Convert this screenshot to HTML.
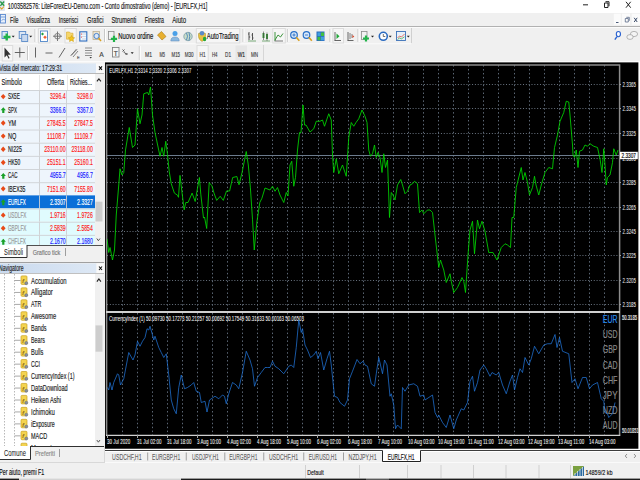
<!DOCTYPE html><html><head><meta charset="utf-8"><title>MT4</title><style>html,body{margin:0;padding:0;background:#f0f0f0;overflow:hidden}svg{display:block}text{font-family:"Liberation Sans",sans-serif}</style></head><body>
<svg width="640" height="480" viewBox="0 0 640 480" font-family="Liberation Sans, sans-serif">
<rect x="0" y="0" width="640" height="480" fill="#f0f0f0" />
<rect x="0" y="0" width="640" height="13" fill="#ffffff" />
<rect x="0" y="0" width="4.8" height="11" fill="#dfe5ee" />
<path d="M0.3 1.5 L4.2 5.8 M4.2 1.5 L0.3 5.8" stroke="#2a9a4a" stroke-width="1.3"/>
<path d="M0 7.3 L1.7 9 L4 6.5" stroke="#e0a020" stroke-width="1.1" fill="none"/>
<text x="7.8" y="8.6" font-size="8.2" fill="#1a1a1a" stroke="#1a1a1a" stroke-width="0.16" textLength="199.5" lengthAdjust="spacingAndGlyphs" >1003582576: LiteForexEU-Demo.com - Conto dimostrativo (demo) - [EURLFX,H1]</text>
<line x1="583" y1="4.8" x2="588" y2="4.8" stroke="#333" stroke-width="1.1" />
<path d="M604.5 3 h3.5 v4.5 h-3.5 z M605.5 1.7 h3.5 v4.5" stroke="#222" stroke-width="1" fill="none"/>
<path d="M626 1.8 L630.7 7.7 M630.7 1.8 L626 7.7" stroke="#222" stroke-width="1"/>
<line x1="0" y1="26.5" x2="640" y2="26.5" stroke="#a8a8a8" stroke-width="1" />
<rect x="0.5" y="14.5" width="5" height="8.5" fill="#e8f0fa" stroke="#5b8bd0" stroke-width="0.9"/>
<line x1="1" y1="17" x2="5" y2="17" stroke="#5b8bd0" stroke-width="0.8" />
<path d="M1.5 21 l1.5 -2 l1.5 1 l1 -1.5" stroke="#5b8bd0" stroke-width="0.6" fill="none"/>
<text x="10" y="22.6" font-size="8.2" fill="#1a1a1a" stroke="#1a1a1a" stroke-width="0.16" textLength="8.5" lengthAdjust="spacingAndGlyphs" >File</text>
<text x="26.6" y="22.6" font-size="8.2" fill="#1a1a1a" stroke="#1a1a1a" stroke-width="0.16" textLength="23.4" lengthAdjust="spacingAndGlyphs" >Visualizza</text>
<text x="58.8" y="22.6" font-size="8.2" fill="#1a1a1a" stroke="#1a1a1a" stroke-width="0.16" textLength="19.3" lengthAdjust="spacingAndGlyphs" >Inserisci</text>
<text x="87.1" y="22.6" font-size="8.2" fill="#1a1a1a" stroke="#1a1a1a" stroke-width="0.16" textLength="16.3" lengthAdjust="spacingAndGlyphs" >Grafici</text>
<text x="111.5" y="22.6" font-size="8.2" fill="#1a1a1a" stroke="#1a1a1a" stroke-width="0.16" textLength="24.8" lengthAdjust="spacingAndGlyphs" >Strumenti</text>
<text x="144.7" y="22.6" font-size="8.2" fill="#1a1a1a" stroke="#1a1a1a" stroke-width="0.16" textLength="19.3" lengthAdjust="spacingAndGlyphs" >Finestra</text>
<text x="172.3" y="22.6" font-size="8.2" fill="#1a1a1a" stroke="#1a1a1a" stroke-width="0.16" textLength="13.7" lengthAdjust="spacingAndGlyphs" >Aiuto</text>
<rect x="613.8" y="13.7" width="7" height="11" fill="#fbfbfb" />
<rect x="622" y="13.7" width="8" height="11" fill="#fbfbfb" />
<rect x="631.8" y="13.7" width="8.2" height="11" fill="#fbfbfb" />
<line x1="616" y1="22.5" x2="618.5" y2="22.5" stroke="#4a5a78" stroke-width="1" />
<path d="M625.3 18.5 h3 v3.5 h-3 z M626.3 17.3 h3 v3.5" stroke="#5a6a88" stroke-width="0.8" fill="none"/>
<path d="M634.2 17.8 L637.2 22 M637.2 17.8 L634.2 22" stroke="#3a4a68" stroke-width="1"/>
<line x1="0" y1="27.4" x2="640" y2="27.4" stroke="#fcfcfc" stroke-width="1" />
<line x1="0" y1="43.7" x2="411" y2="43.7" stroke="#fbfbfb" stroke-width="1" />
<rect x="0" y="61" width="640" height="1.4" fill="#fbfbfb" />
<line x1="35" y1="29" x2="35" y2="42" stroke="#c8c8c8" stroke-width="1" />
<line x1="36" y1="29" x2="36" y2="42" stroke="#ffffff" stroke-width="1" />
<rect x="38.5" y="28.5" width="11.5" height="14.5" fill="#f6f6f6" stroke="#dcdcdc" stroke-width="1"/>
<rect x="65.0" y="28.5" width="11.3" height="14.5" fill="#f6f6f6" stroke="#dcdcdc" stroke-width="1"/>
<line x1="104.5" y1="29" x2="104.5" y2="42" stroke="#c8c8c8" stroke-width="1" />
<line x1="105.5" y1="29" x2="105.5" y2="42" stroke="#ffffff" stroke-width="1" />
<line x1="243" y1="29" x2="243" y2="42" stroke="#c8c8c8" stroke-width="1" />
<line x1="244" y1="29" x2="244" y2="42" stroke="#ffffff" stroke-width="1" />
<rect x="272.8" y="28.5" width="12.5" height="14.5" fill="#f6f6f6" stroke="#dcdcdc" stroke-width="1"/>
<line x1="287.8" y1="29" x2="287.8" y2="42" stroke="#c8c8c8" stroke-width="1" />
<line x1="288.8" y1="29" x2="288.8" y2="42" stroke="#ffffff" stroke-width="1" />
<line x1="330" y1="29" x2="330" y2="42" stroke="#c8c8c8" stroke-width="1" />
<line x1="331" y1="29" x2="331" y2="42" stroke="#ffffff" stroke-width="1" />
<line x1="358" y1="29" x2="358" y2="42" stroke="#c8c8c8" stroke-width="1" />
<line x1="359" y1="29" x2="359" y2="42" stroke="#ffffff" stroke-width="1" />
<line x1="411.5" y1="28" x2="411.5" y2="43" stroke="#d0d0d0" stroke-width="1" />
<rect x="2" y="31.5" width="5.5" height="7" fill="#dbe8f7" stroke="#4f86c8" stroke-width="0.9"/>
<path d="M6.7 33.5 v7 M3.5 37 h7" stroke="#22b34a" stroke-width="2.4"/>
<path d="M11.7 35.7 h3 l-1.5 1.8 z" fill="#222"/>
<rect x="19.2" y="31.5" width="6.5" height="7" fill="#dce6f3" stroke="#5a8ac8" stroke-width="0.9"/>
<rect x="21.7" y="34.5" width="6" height="7" fill="#c8d8ee" stroke="#5a8ac8" stroke-width="0.9"/>
<path d="M29.2 35.7 h3 l-1.5 1.8 z" fill="#222"/>
<rect x="40.5" y="31" width="7" height="10.5" fill="#ffffff" stroke="#4f86c8" stroke-width="0.9"/>
<path d="M42.5 32.5 l1.5 1.5 l-1.5 1.5 l-1.5 -1.5z" fill="#20a040"/>
<path d="M45 35.5 l1.8 1.8 l-1.8 1.8 l-1.8 -1.8z" fill="#f06030"/>
<path d="M57.5 31.5 v9.5 M53 36.2 h9" stroke="#666" stroke-width="0.9"/>
<circle cx="57.5" cy="36.2" r="2.8" stroke="#777" stroke-width="0.9" fill="none"/>
<path d="M66.5 32 h3 l1 1.2 h2.5 v6 h-6.5z" fill="#f6d66a" stroke="#d6a830" stroke-width="0.6"/>
<path d="M71.5 35.5 l1 2 2.2 0.3 -1.6 1.5 0.4 2.2 -2 -1 -2 1 0.4 -2.2 -1.6 -1.5 2.2 -0.3z" fill="#f3c520" stroke="#c99a10" stroke-width="0.5"/>
<rect x="79.8" y="31.8" width="7" height="9.2" fill="#f4f8fc" stroke="#2f6ec0" stroke-width="1.1"/>
<line x1="82" y1="34" x2="86" y2="34" stroke="#b0c0d8" stroke-width="0.6" />
<line x1="82" y1="36.5" x2="86" y2="36.5" stroke="#b0c0d8" stroke-width="0.6" />
<line x1="82" y1="39" x2="86" y2="39" stroke="#b0c0d8" stroke-width="0.6" />
<circle cx="81.5" cy="34" r="0.6" fill="#e03030"/><circle cx="81.5" cy="37" r="0.6" fill="#e03030"/>
<rect x="93" y="31.5" width="6.5" height="8" fill="#ece4d2" stroke="#b8a888" stroke-width="0.7"/>
<circle cx="96.5" cy="36" r="2.6" fill="#dbe8f8" stroke="#3a78c8" stroke-width="0.9"/>
<path d="M98.5 38 l2.5 3" stroke="#d9a020" stroke-width="1.4"/>
<rect x="108.5" y="31.5" width="5.5" height="8" fill="#f2f2f2" stroke="#8a8a8a" stroke-width="0.8"/>
<path d="M114 35.8 v6.2 M110.9 38.9 h6.2" stroke="#22b34a" stroke-width="2.2"/>
<text x="118.3" y="38.7" font-size="8.2" fill="#111" stroke="#111" stroke-width="0.16" textLength="35" lengthAdjust="spacingAndGlyphs" >Nuovo ordine</text>
<path d="M157.5 35 l4 -3.5 l4.5 5 l-4 3.5z" fill="#e8b030" stroke="#a87818" stroke-width="0.6"/>
<circle cx="175" cy="33.5" r="2.5" fill="#4aa0e8"/>
<path d="M170.8 41 q0 -4 4.2 -4 q4.2 0 4.2 4z" fill="#8ab8e0" stroke="#5a88b8" stroke-width="0.5"/>
<circle cx="188" cy="36.5" r="4.2" fill="#c8dcc8" stroke="#7a9aa8" stroke-width="0.8"/>
<path d="M186.5 33 q2 3 0 7 M189 32.5 q1.5 4 0 8" stroke="#3a7ab8" stroke-width="0.8" fill="none"/>
<rect x="196.3" y="28.5" width="43.5" height="14.5" fill="#f6f6f6" stroke="#dcdcdc" stroke-width="1"/>
<path d="M198.5 33.5 q3.5 -3 7 0 v3 q0 3 -3.5 5 q-3.5 -2 -3.5 -5z" fill="#e8c040" stroke="#a88a20" stroke-width="0.5"/>
<circle cx="202" cy="33.2" r="2.3" fill="#5a8ac8"/>
<ellipse cx="204.6" cy="39" rx="1.7" ry="2.3" fill="#22a83a"/>
<text x="206.8" y="38.8" font-size="8.2" fill="#111" stroke="#111" stroke-width="0.16" textLength="31.8" lengthAdjust="spacingAndGlyphs" >AutoTrading</text>
<path d="M249 32 v8 M248 34 h1 M249 37 h1.2 M252.5 33 v7 M251.5 35 h1 M252.5 38 h1" stroke="#444" stroke-width="0.9"/>
<line x1="248" y1="41" x2="256" y2="41" stroke="#5a9a5a" stroke-width="0.8" />
<rect x="262.5" y="33" width="2" height="5" fill="#3a9a3a" />
<rect x="266" y="34" width="2" height="5" fill="#3a9a3a" />
<line x1="263.5" y1="31.5" x2="263.5" y2="40" stroke="#444" stroke-width="0.6" />
<line x1="267" y1="32.5" x2="267" y2="41" stroke="#444" stroke-width="0.6" />
<line x1="262" y1="41" x2="270" y2="41" stroke="#5a9a5a" stroke-width="0.8" />
<path d="M275 41 v-9 M275 40 l3 -5 l2.5 2 l2.5 -3.5" stroke="#2a8a2a" stroke-width="0.9" fill="none"/>
<line x1="274.5" y1="41" x2="283" y2="41" stroke="#444" stroke-width="0.7" />
<circle cx="294" cy="35" r="3.3" fill="#dbeafa" stroke="#2a70c8" stroke-width="1.2"/>
<path d="M296.3 37.3 l3 3.5" stroke="#d9a020" stroke-width="1.6"/>
<path d="M292.4 35 h3.2" stroke="#2a70c8" stroke-width="0.9"/>
<path d="M294 33.4 v3.2" stroke="#2a70c8" stroke-width="0.9"/>
<circle cx="306.5" cy="35" r="3.3" fill="#dbeafa" stroke="#2a70c8" stroke-width="1.2"/>
<path d="M308.8 37.3 l3 3.5" stroke="#d9a020" stroke-width="1.6"/>
<path d="M304.9 35 h3.2" stroke="#2a70c8" stroke-width="0.9"/>
<rect x="316.5" y="31.5" width="8" height="9.5" fill="#2a6ac0" />
<rect x="317.5" y="32.5" width="3" height="3.5" fill="#40a0e0" />
<rect x="321" y="32.5" width="3" height="3.5" fill="#40c040" />
<rect x="317.5" y="36.8" width="3" height="3.5" fill="#40c040" />
<rect x="321" y="36.8" width="3" height="3.5" fill="#40a0e0" />
<rect x="333.0" y="28.5" width="10.5" height="14.5" fill="#f6f6f6" stroke="#dcdcdc" stroke-width="1"/>
<path d="M335 32 v8.5 M334.5 40.5 h6.5" stroke="#444" stroke-width="0.8"/>
<path d="M336.5 33.5 l3 2.8 l-3 2.8z" fill="#22a83a"/>
<path d="M348 32 v8.5 M347.5 40.5 h6" stroke="#444" stroke-width="0.8"/>
<path d="M350 33 v6 M352 34 v4" stroke="#666" stroke-width="0.8"/>
<path d="M352.5 35 l1.8 1.5 l-1.8 1.5z" fill="#e04020"/>
<rect x="361.5" y="31.5" width="5.5" height="8" fill="#f2f2f2" stroke="#8a8a8a" stroke-width="0.8"/>
<path d="M366 35.5 v6 M363 38.5 h6" stroke="#22b34a" stroke-width="2.2"/>
<path d="M371.0 35.7 h3 l-1.5 1.8 z" fill="#222"/>
<circle cx="383.3" cy="36.3" r="4" fill="#ffffff" stroke="#2a6ac0" stroke-width="1.6"/>
<path d="M383.3 34 v2.5 h2" stroke="#333" stroke-width="0.7" fill="none"/>
<path d="M388.7 35.7 h3 l-1.5 1.8 z" fill="#222"/>
<rect x="396.5" y="31.5" width="9" height="9" fill="#e8f0f8" stroke="#3a70b8" stroke-width="0.9"/>
<path d="M397.5 38 l2 -2 l2 1 l3 -3" stroke="#e04030" stroke-width="0.7" fill="none"/>
<path d="M397.5 39.5 l2 -1.5 l2 0.8 l3 -2" stroke="#30a040" stroke-width="0.7" fill="none"/>
<path d="M406.8 35.7 h3 l-1.5 1.8 z" fill="#222"/>
<ellipse cx="618.4" cy="34.1" rx="2.1" ry="2.6" fill="#f8fbff" stroke="#2a62d0" stroke-width="1.1"/>
<path d="M617 36.6 l-2.2 3" stroke="#2a62d0" stroke-width="1.4"/>
<ellipse cx="634" cy="34" rx="3.6" ry="2.6" fill="#f4f4f4" stroke="#9a9a9a" stroke-width="0.7"/>
<ellipse cx="630" cy="37" rx="3.2" ry="2.4" fill="#f4f4f4" stroke="#9a9a9a" stroke-width="0.7"/>
<rect x="2.2" y="45.5" width="10.5" height="15.5" fill="#f6f6f6" stroke="#dcdcdc" stroke-width="1"/>
<path d="M4.5 47.5 v10 l2.3 -2.3 l1.8 3.5 l1 -0.6 l-1.8 -3.3 h3z" fill="#333"/>
<path d="M19.8 47.5 v10 M14.8 52.5 h10" stroke="#555" stroke-width="0.9"/>
<line x1="27.5" y1="46" x2="27.5" y2="60" stroke="#c8c8c8" stroke-width="1" />
<line x1="28.5" y1="46" x2="28.5" y2="60" stroke="#ffffff" stroke-width="1" />
<line x1="35.5" y1="47.5" x2="35.5" y2="57.5" stroke="#555" stroke-width="0.9" />
<line x1="45.5" y1="53" x2="52.5" y2="53" stroke="#555" stroke-width="0.9" />
<line x1="59" y1="57.5" x2="65" y2="48" stroke="#555" stroke-width="0.9" />
<path d="M71.5 55 l5 -6 M73 57 l5 -6 M70.5 56 l6.5 -6.5" stroke="#555" stroke-width="0.7"/>
<text x="77" y="59" font-size="4" fill="#555" stroke="#555" stroke-width="0.16" >E</text>
<path d="M85 48 h7 M85 50.5 h7 M85 53 h7 M85 55.5 h7" stroke="#666" stroke-width="0.7"/>
<path d="M89.5 57 l1.2 1.5 l1.2 -1.5z" fill="#333"/>
<text x="99.3" y="57.3" font-size="7.5" fill="#444" stroke="#444" stroke-width="0.16" textLength="4.5" lengthAdjust="spacingAndGlyphs" >A</text>
<rect x="112.5" y="47.5" width="6.5" height="9.5" fill="#f6f6f6" stroke="#777" stroke-width="0.8"/>
<text x="113.8" y="55.6" font-size="6.5" fill="#444" stroke="#444" stroke-width="0.16" >T</text>
<path d="M122.5 49.5 l2 2 M124.5 49.5 l-2 2 M125.5 53 l2 2 M127.5 53 l-2 2" stroke="#444" stroke-width="0.8"/>
<path d="M123.5 52 l3 2" stroke="#444" stroke-width="0.8"/>
<path d="M130.7 52.2 h3 l-1.5 1.8 z" fill="#222"/>
<line x1="139.3" y1="46" x2="139.3" y2="60" stroke="#c8c8c8" stroke-width="1" />
<line x1="140.3" y1="46" x2="140.3" y2="60" stroke="#ffffff" stroke-width="1" />
<rect x="197.0" y="45.5" width="11.2" height="15.5" fill="#f6f6f6" stroke="#dcdcdc" stroke-width="1"/>
<rect x="235.5" y="45.5" width="11.5" height="15" fill="#e6e6e6" />
<text x="145" y="56.8" font-size="7.2" fill="#3a3a3a" stroke="#3a3a3a" stroke-width="0.16" textLength="7" lengthAdjust="spacingAndGlyphs" >M1</text>
<text x="159.5" y="56.8" font-size="7.2" fill="#3a3a3a" stroke="#3a3a3a" stroke-width="0.16" textLength="5.5" lengthAdjust="spacingAndGlyphs" >M5</text>
<text x="171.6" y="56.8" font-size="7.2" fill="#3a3a3a" stroke="#3a3a3a" stroke-width="0.16" textLength="8.4" lengthAdjust="spacingAndGlyphs" >M15</text>
<text x="184.7" y="56.8" font-size="7.2" fill="#3a3a3a" stroke="#3a3a3a" stroke-width="0.16" textLength="8.8" lengthAdjust="spacingAndGlyphs" >M30</text>
<text x="199.6" y="56.8" font-size="7.2" fill="#3a3a3a" stroke="#3a3a3a" stroke-width="0.16" textLength="5.9" lengthAdjust="spacingAndGlyphs" >H1</text>
<text x="212" y="56.8" font-size="7.2" fill="#3a3a3a" stroke="#3a3a3a" stroke-width="0.16" textLength="5.5" lengthAdjust="spacingAndGlyphs" >H4</text>
<text x="225" y="56.8" font-size="7.2" fill="#3a3a3a" stroke="#3a3a3a" stroke-width="0.16" textLength="6" lengthAdjust="spacingAndGlyphs" >D1</text>
<text x="237.7" y="56.8" font-size="7.2" fill="#222" stroke="#222" stroke-width="0.16" textLength="7.3" lengthAdjust="spacingAndGlyphs" >W1</text>
<text x="251" y="56.8" font-size="7.2" fill="#3a3a3a" stroke="#3a3a3a" stroke-width="0.16" textLength="7" lengthAdjust="spacingAndGlyphs" >MN</text>
<line x1="263.5" y1="45" x2="263.5" y2="61" stroke="#d6d6d6" stroke-width="1" />
<defs><linearGradient id="hg" x1="0" x2="1" y1="0" y2="0"><stop offset="0" stop-color="#cadaee"/><stop offset="1" stop-color="#dde8f5"/></linearGradient></defs>
<rect x="0" y="63.5" width="96" height="9.5" fill="url(#hg)" />
<rect x="96" y="63.5" width="8.3" height="9.5" fill="#f9f9f9" />
<path d="M99 66.3 L102 69.8 M102 66.3 L99 69.8" stroke="#111" stroke-width="1.1"/>
<text x="-0.8" y="71.0" font-size="8.4" fill="#222" stroke="#222" stroke-width="0.16" textLength="63" lengthAdjust="spacingAndGlyphs" >Vista del mercato: 17:29:31</text>
<line x1="0" y1="73.5" x2="104" y2="73.5" stroke="#b8b8b8" stroke-width="1" />
<rect x="0" y="74" width="95" height="171" fill="#ffffff" />
<rect x="95" y="74" width="9.2" height="171" fill="#f0f0f0" />
<path d="M96.9 81.4 l2 -2.6 l2 2.6" stroke="#222" stroke-width="1.1" fill="none"/>
<path d="M96.8 238.5 l1.6 2.2 l1.6 -2.2" stroke="#333" stroke-width="0.8" fill="none"/>
<rect x="95.5" y="201.7" width="7" height="19.8" fill="#cdcdcd" />
<line x1="39.5" y1="75" x2="39.5" y2="90" stroke="#e8e8e8" stroke-width="1" />
<line x1="67.5" y1="75" x2="67.5" y2="90" stroke="#e8e8e8" stroke-width="1" />
<text x="1.5" y="84.7" font-size="9" fill="#222" stroke="#222" stroke-width="0.16" textLength="20.5" lengthAdjust="spacingAndGlyphs" >Simbolo</text>
<text x="47" y="84.7" font-size="9" fill="#222" stroke="#222" stroke-width="0.16" textLength="17" lengthAdjust="spacingAndGlyphs" >Offerta</text>
<text x="70" y="84.7" font-size="9" fill="#222" stroke="#222" stroke-width="0.16" textLength="22" lengthAdjust="spacingAndGlyphs" >Richies...</text>
<rect x="0" y="90.0" width="95" height="13.17" fill="#eef5fc" />
<line x1="0" y1="90.5" x2="95" y2="90.5" stroke="#d0d4d8" stroke-width="1" />
<line x1="39.5" y1="90.0" x2="39.5" y2="103.17" stroke="#d0d2d4" stroke-width="1" />
<line x1="66.5" y1="90.0" x2="66.5" y2="103.17" stroke="#d0d2d4" stroke-width="1" />
<path d="M3.2 93.9 l2.4 2.7 l-2.4 2.7 l-2.4 -2.7z" fill="#e84a18"/>
<text x="7.9" y="99.4" font-size="8.2" fill="#222" stroke="#222" stroke-width="0.16" textLength="11.9" lengthAdjust="spacingAndGlyphs" >SX5E</text>
<text x="65.6" y="99.4" font-size="8.2" fill="#ff2020" stroke="#ff2020" stroke-width="0.16" textLength="15.7" lengthAdjust="spacingAndGlyphs" text-anchor="end" >3296.4</text>
<text x="92.8" y="99.4" font-size="8.2" fill="#ff2020" stroke="#ff2020" stroke-width="0.16" textLength="15.7" lengthAdjust="spacingAndGlyphs" text-anchor="end" >3298.0</text>
<rect x="0" y="103.17" width="95" height="13.17" fill="#eef5fc" />
<line x1="0" y1="103.67" x2="95" y2="103.67" stroke="#d0d4d8" stroke-width="1" />
<line x1="39.5" y1="103.17" x2="39.5" y2="116.34" stroke="#d0d2d4" stroke-width="1" />
<line x1="66.5" y1="103.17" x2="66.5" y2="116.34" stroke="#d0d2d4" stroke-width="1" />
<path d="M3.3 107.17 l2.6 3 h-1.5 v2.8 h-2.2 v-2.8 h-1.5z" fill="#18a028"/>
<text x="7.9" y="112.57" font-size="8.2" fill="#222" stroke="#222" stroke-width="0.16" textLength="9" lengthAdjust="spacingAndGlyphs" >SPX</text>
<text x="65.6" y="112.57" font-size="8.2" fill="#2020ff" stroke="#2020ff" stroke-width="0.16" textLength="15.7" lengthAdjust="spacingAndGlyphs" text-anchor="end" >3366.6</text>
<text x="92.8" y="112.57" font-size="8.2" fill="#2020ff" stroke="#2020ff" stroke-width="0.16" textLength="15.7" lengthAdjust="spacingAndGlyphs" text-anchor="end" >3367.0</text>
<rect x="0" y="116.34" width="95" height="13.17" fill="#eef5fc" />
<line x1="0" y1="116.84" x2="95" y2="116.84" stroke="#d0d4d8" stroke-width="1" />
<line x1="39.5" y1="116.34" x2="39.5" y2="129.51" stroke="#d0d2d4" stroke-width="1" />
<line x1="66.5" y1="116.34" x2="66.5" y2="129.51" stroke="#d0d2d4" stroke-width="1" />
<path d="M3.2 120.24 l2.4 2.7 l-2.4 2.7 l-2.4 -2.7z" fill="#e84a18"/>
<text x="7.9" y="125.74" font-size="8.2" fill="#222" stroke="#222" stroke-width="0.16" textLength="8.3" lengthAdjust="spacingAndGlyphs" >YM</text>
<text x="65.6" y="125.74" font-size="8.2" fill="#ff2020" stroke="#ff2020" stroke-width="0.16" textLength="18.5" lengthAdjust="spacingAndGlyphs" text-anchor="end" >27845.5</text>
<text x="92.8" y="125.74" font-size="8.2" fill="#ff2020" stroke="#ff2020" stroke-width="0.16" textLength="18.5" lengthAdjust="spacingAndGlyphs" text-anchor="end" >27847.5</text>
<rect x="0" y="129.51" width="95" height="13.17" fill="#eef5fc" />
<line x1="0" y1="130.01" x2="95" y2="130.01" stroke="#d0d4d8" stroke-width="1" />
<line x1="39.5" y1="129.51" x2="39.5" y2="142.67999999999998" stroke="#d0d2d4" stroke-width="1" />
<line x1="66.5" y1="129.51" x2="66.5" y2="142.67999999999998" stroke="#d0d2d4" stroke-width="1" />
<path d="M3.2 133.41 l2.4 2.7 l-2.4 2.7 l-2.4 -2.7z" fill="#e84a18"/>
<text x="7.9" y="138.91" font-size="8.2" fill="#222" stroke="#222" stroke-width="0.16" textLength="8.3" lengthAdjust="spacingAndGlyphs" >NQ</text>
<text x="65.6" y="138.91" font-size="8.2" fill="#ff2020" stroke="#ff2020" stroke-width="0.16" textLength="18.5" lengthAdjust="spacingAndGlyphs" text-anchor="end" >11108.7</text>
<text x="92.8" y="138.91" font-size="8.2" fill="#ff2020" stroke="#ff2020" stroke-width="0.16" textLength="18.5" lengthAdjust="spacingAndGlyphs" text-anchor="end" >11109.7</text>
<rect x="0" y="142.68" width="95" height="13.17" fill="#eef5fc" />
<line x1="0" y1="143.18" x2="95" y2="143.18" stroke="#d0d4d8" stroke-width="1" />
<line x1="39.5" y1="142.68" x2="39.5" y2="155.85" stroke="#d0d2d4" stroke-width="1" />
<line x1="66.5" y1="142.68" x2="66.5" y2="155.85" stroke="#d0d2d4" stroke-width="1" />
<path d="M3.2 146.58 l2.4 2.7 l-2.4 2.7 l-2.4 -2.7z" fill="#e84a18"/>
<text x="7.9" y="152.08" font-size="8.2" fill="#222" stroke="#222" stroke-width="0.16" textLength="14" lengthAdjust="spacingAndGlyphs" >NI225</text>
<text x="65.6" y="152.08" font-size="8.2" fill="#ff2020" stroke="#ff2020" stroke-width="0.16" textLength="21.4" lengthAdjust="spacingAndGlyphs" text-anchor="end" >23110.00</text>
<text x="92.8" y="152.08" font-size="8.2" fill="#ff2020" stroke="#ff2020" stroke-width="0.16" textLength="21.4" lengthAdjust="spacingAndGlyphs" text-anchor="end" >23118.00</text>
<rect x="0" y="155.85" width="95" height="13.17" fill="#eef5fc" />
<line x1="0" y1="156.35" x2="95" y2="156.35" stroke="#d0d4d8" stroke-width="1" />
<line x1="39.5" y1="155.85" x2="39.5" y2="169.01999999999998" stroke="#d0d2d4" stroke-width="1" />
<line x1="66.5" y1="155.85" x2="66.5" y2="169.01999999999998" stroke="#d0d2d4" stroke-width="1" />
<path d="M3.2 159.75 l2.4 2.7 l-2.4 2.7 l-2.4 -2.7z" fill="#e84a18"/>
<text x="7.9" y="165.25" font-size="8.2" fill="#222" stroke="#222" stroke-width="0.16" textLength="12.5" lengthAdjust="spacingAndGlyphs" >HK50</text>
<text x="65.6" y="165.25" font-size="8.2" fill="#ff2020" stroke="#ff2020" stroke-width="0.16" textLength="18.5" lengthAdjust="spacingAndGlyphs" text-anchor="end" >25151.1</text>
<text x="92.8" y="165.25" font-size="8.2" fill="#ff2020" stroke="#ff2020" stroke-width="0.16" textLength="18.5" lengthAdjust="spacingAndGlyphs" text-anchor="end" >25160.1</text>
<rect x="0" y="169.02" width="95" height="13.17" fill="#eef5fc" />
<line x1="0" y1="169.52" x2="95" y2="169.52" stroke="#d0d4d8" stroke-width="1" />
<line x1="39.5" y1="169.01999999999998" x2="39.5" y2="182.18999999999997" stroke="#d0d2d4" stroke-width="1" />
<line x1="66.5" y1="169.01999999999998" x2="66.5" y2="182.18999999999997" stroke="#d0d2d4" stroke-width="1" />
<path d="M3.3 173.02 l2.6 3 h-1.5 v2.8 h-2.2 v-2.8 h-1.5z" fill="#18a028"/>
<text x="7.9" y="178.42" font-size="8.2" fill="#222" stroke="#222" stroke-width="0.16" textLength="9.5" lengthAdjust="spacingAndGlyphs" >CAC</text>
<text x="65.6" y="178.42" font-size="8.2" fill="#2020ff" stroke="#2020ff" stroke-width="0.16" textLength="15.7" lengthAdjust="spacingAndGlyphs" text-anchor="end" >4955.7</text>
<text x="92.8" y="178.42" font-size="8.2" fill="#2020ff" stroke="#2020ff" stroke-width="0.16" textLength="15.7" lengthAdjust="spacingAndGlyphs" text-anchor="end" >4956.7</text>
<rect x="0" y="182.19" width="95" height="13.17" fill="#eef5fc" />
<line x1="0" y1="182.69" x2="95" y2="182.69" stroke="#d0d4d8" stroke-width="1" />
<line x1="39.5" y1="182.19" x2="39.5" y2="195.35999999999999" stroke="#d0d2d4" stroke-width="1" />
<line x1="66.5" y1="182.19" x2="66.5" y2="195.35999999999999" stroke="#d0d2d4" stroke-width="1" />
<path d="M3.2 186.09 l2.4 2.7 l-2.4 2.7 l-2.4 -2.7z" fill="#e84a18"/>
<text x="7.9" y="191.59" font-size="8.2" fill="#222" stroke="#222" stroke-width="0.16" textLength="17.5" lengthAdjust="spacingAndGlyphs" >IBEX35</text>
<text x="65.6" y="191.59" font-size="8.2" fill="#ff2020" stroke="#ff2020" stroke-width="0.16" textLength="18.5" lengthAdjust="spacingAndGlyphs" text-anchor="end" >7151.60</text>
<text x="92.8" y="191.59" font-size="8.2" fill="#ff2020" stroke="#ff2020" stroke-width="0.16" textLength="18.5" lengthAdjust="spacingAndGlyphs" text-anchor="end" >7155.80</text>
<rect x="0" y="195.36" width="95" height="13.17" fill="#0b6fd8" />
<line x1="39.5" y1="195.36" x2="39.5" y2="208.53" stroke="#b8c4d4" stroke-width="1" />
<line x1="66.5" y1="195.36" x2="66.5" y2="208.53" stroke="#b8c4d4" stroke-width="1" />
<path d="M3.3 199.36 l2.6 3 h-1.5 v2.8 h-2.2 v-2.8 h-1.5z" fill="#18a028"/>
<text x="7.9" y="204.76" font-size="8.2" fill="#ffffff" stroke="#ffffff" stroke-width="0.16" textLength="18" lengthAdjust="spacingAndGlyphs" >EURLFX</text>
<text x="65.6" y="204.76" font-size="8.2" fill="#ffffff" stroke="#ffffff" stroke-width="0.16" textLength="15.7" lengthAdjust="spacingAndGlyphs" text-anchor="end" >2.3307</text>
<text x="92.8" y="204.76" font-size="8.2" fill="#ffffff" stroke="#ffffff" stroke-width="0.16" textLength="15.7" lengthAdjust="spacingAndGlyphs" text-anchor="end" >2.3327</text>
<rect x="0" y="208.53" width="95" height="13.17" fill="#e0fbfe" />
<line x1="0" y1="209.03" x2="95" y2="209.03" stroke="#d0d4d8" stroke-width="1" />
<line x1="39.5" y1="208.53" x2="39.5" y2="221.7" stroke="#d0d2d4" stroke-width="1" />
<line x1="66.5" y1="208.53" x2="66.5" y2="221.7" stroke="#d0d2d4" stroke-width="1" />
<path d="M3.2 212.43 l2.4 2.7 l-2.4 2.7 l-2.4 -2.7z" fill="#e84a18"/>
<text x="7.9" y="217.93" font-size="8.2" fill="#9a9a9a" stroke="#9a9a9a" stroke-width="0.16" textLength="18.5" lengthAdjust="spacingAndGlyphs" >USDLFX</text>
<text x="65.6" y="217.93" font-size="8.2" fill="#ff2020" stroke="#ff2020" stroke-width="0.16" textLength="15.7" lengthAdjust="spacingAndGlyphs" text-anchor="end" >1.9716</text>
<text x="92.8" y="217.93" font-size="8.2" fill="#ff2020" stroke="#ff2020" stroke-width="0.16" textLength="15.7" lengthAdjust="spacingAndGlyphs" text-anchor="end" >1.9726</text>
<rect x="0" y="221.7" width="95" height="13.17" fill="#e0fbfe" />
<line x1="0" y1="222.2" x2="95" y2="222.2" stroke="#d0d4d8" stroke-width="1" />
<line x1="39.5" y1="221.7" x2="39.5" y2="234.86999999999998" stroke="#d0d2d4" stroke-width="1" />
<line x1="66.5" y1="221.7" x2="66.5" y2="234.86999999999998" stroke="#d0d2d4" stroke-width="1" />
<path d="M3.2 225.6 l2.4 2.7 l-2.4 2.7 l-2.4 -2.7z" fill="#e84a18"/>
<text x="7.9" y="231.1" font-size="8.2" fill="#9a9a9a" stroke="#9a9a9a" stroke-width="0.16" textLength="18.5" lengthAdjust="spacingAndGlyphs" >GBPLFX</text>
<text x="65.6" y="231.1" font-size="8.2" fill="#ff2020" stroke="#ff2020" stroke-width="0.16" textLength="15.7" lengthAdjust="spacingAndGlyphs" text-anchor="end" >2.5839</text>
<text x="92.8" y="231.1" font-size="8.2" fill="#ff2020" stroke="#ff2020" stroke-width="0.16" textLength="15.7" lengthAdjust="spacingAndGlyphs" text-anchor="end" >2.5854</text>
<rect x="0" y="234.87" width="95" height="10.13" fill="#e0fbfe" />
<line x1="0" y1="235.37" x2="95" y2="235.37" stroke="#d0d4d8" stroke-width="1" />
<line x1="39.5" y1="234.87" x2="39.5" y2="245.0" stroke="#d0d2d4" stroke-width="1" />
<line x1="66.5" y1="234.87" x2="66.5" y2="245.0" stroke="#d0d2d4" stroke-width="1" />
<path d="M3.3 238.87 l2.6 3 h-1.5 v2.8 h-2.2 v-2.8 h-1.5z" fill="#18a028"/>
<text x="7.9" y="244.27" font-size="8.2" fill="#9a9a9a" stroke="#9a9a9a" stroke-width="0.16" textLength="18" lengthAdjust="spacingAndGlyphs" >CHFLFX</text>
<text x="65.6" y="244.27" font-size="8.2" fill="#2020ff" stroke="#2020ff" stroke-width="0.16" textLength="15.7" lengthAdjust="spacingAndGlyphs" text-anchor="end" >2.1670</text>
<text x="92.8" y="244.27" font-size="8.2" fill="#2020ff" stroke="#2020ff" stroke-width="0.16" textLength="15.7" lengthAdjust="spacingAndGlyphs" text-anchor="end" >2.1680</text>
<rect x="0" y="245" width="104" height="13" fill="#f0f0f0" />
<line x1="27" y1="245.5" x2="103" y2="245.5" stroke="#505050" stroke-width="1" />
<rect x="0" y="245" width="27" height="12.5" fill="#ffffff" />
<path d="M0 257.5 H27 V245" stroke="#303030" stroke-width="1" fill="none"/>
<text x="4.1" y="254.6" font-size="8.4" fill="#1a1a1a" stroke="#1a1a1a" stroke-width="0.05" textLength="19" lengthAdjust="spacingAndGlyphs" >Simboli</text>
<text x="32.7" y="254.5" font-size="8" fill="#777" stroke="#777" stroke-width="0.16" textLength="27.7" lengthAdjust="spacingAndGlyphs" >Grafico tick</text>
<line x1="65.5" y1="248" x2="65.5" y2="256" stroke="#888" stroke-width="0.8" />
<line x1="0" y1="262.5" x2="104" y2="262.5" stroke="#a0a0a0" stroke-width="1" />
<rect x="0" y="263.5" width="96.5" height="9.8" fill="url(#hg)" />
<rect x="96.5" y="263.5" width="7.8" height="9.8" fill="#f9f9f9" />
<path d="M99 266.5 L102 270 M102 266.5 L99 270" stroke="#111" stroke-width="1.1"/>
<text x="-1" y="271.2" font-size="8.2" fill="#222" stroke="#222" stroke-width="0.16" textLength="24.5" lengthAdjust="spacingAndGlyphs" >Navigatore</text>
<line x1="0" y1="273.5" x2="104" y2="273.5" stroke="#c0c0c0" stroke-width="1" />
<rect x="0" y="274" width="95" height="172" fill="#ffffff" />
<rect x="95" y="274" width="9.2" height="172" fill="#f0f0f0" />
<path d="M96.9 281.6 l2 -2.6 l2 2.6" stroke="#222" stroke-width="1.1" fill="none"/>
<path d="M96.8 440 l1.6 2.2 l1.6 -2.2" stroke="#333" stroke-width="0.8" fill="none"/>
<rect x="95.5" y="325.4" width="7" height="26.3" fill="#cdcdcd" />
<path d="M4.5 274 V446 M14.5 274 V446" stroke="#b8b8b8" stroke-width="1" stroke-dasharray="1.5 1.5"/>
<line x1="14.5" y1="280.5" x2="20.5" y2="280.5" stroke="#a8a8a8" stroke-width="1" />
<rect x="21" y="275.9" width="6" height="8.5" rx="1" fill="#f4d450" stroke="#c8a020" stroke-width="0.7"/>
<text x="22.3" y="283.1" font-size="6" fill="#806010" stroke="#806010" stroke-width="0.16" font-style="italic">f</text>
<circle cx="26.3" cy="283.2" r="1.5" fill="#8890a0" stroke="#606878" stroke-width="0.5"/>
<text x="31" y="283.5" font-size="8.8" fill="#222" stroke="#222" stroke-width="0.16" textLength="35.5" lengthAdjust="spacingAndGlyphs" >Accumulation</text>
<line x1="14.5" y1="292.45" x2="20.5" y2="292.45" stroke="#a8a8a8" stroke-width="1" />
<rect x="21" y="287.85" width="6" height="8.5" rx="1" fill="#f4d450" stroke="#c8a020" stroke-width="0.7"/>
<text x="22.3" y="295.05" font-size="6" fill="#806010" stroke="#806010" stroke-width="0.16" font-style="italic">f</text>
<circle cx="26.3" cy="295.15" r="1.5" fill="#8890a0" stroke="#606878" stroke-width="0.5"/>
<text x="31" y="295.45" font-size="8.8" fill="#222" stroke="#222" stroke-width="0.16" textLength="21.8" lengthAdjust="spacingAndGlyphs" >Alligator</text>
<line x1="14.5" y1="304.4" x2="20.5" y2="304.4" stroke="#a8a8a8" stroke-width="1" />
<rect x="21" y="299.8" width="6" height="8.5" rx="1" fill="#f4d450" stroke="#c8a020" stroke-width="0.7"/>
<text x="22.3" y="307.0" font-size="6" fill="#806010" stroke="#806010" stroke-width="0.16" font-style="italic">f</text>
<circle cx="26.3" cy="307.1" r="1.5" fill="#8890a0" stroke="#606878" stroke-width="0.5"/>
<text x="31" y="307.4" font-size="8.8" fill="#222" stroke="#222" stroke-width="0.16" textLength="10.3" lengthAdjust="spacingAndGlyphs" >ATR</text>
<line x1="14.5" y1="316.35" x2="20.5" y2="316.35" stroke="#a8a8a8" stroke-width="1" />
<rect x="21" y="311.75" width="6" height="8.5" rx="1" fill="#f4d450" stroke="#c8a020" stroke-width="0.7"/>
<text x="22.3" y="318.95" font-size="6" fill="#806010" stroke="#806010" stroke-width="0.16" font-style="italic">f</text>
<circle cx="26.3" cy="319.05" r="1.5" fill="#8890a0" stroke="#606878" stroke-width="0.5"/>
<text x="31" y="319.35" font-size="8.8" fill="#222" stroke="#222" stroke-width="0.16" textLength="25.2" lengthAdjust="spacingAndGlyphs" >Awesome</text>
<line x1="14.5" y1="328.3" x2="20.5" y2="328.3" stroke="#a8a8a8" stroke-width="1" />
<rect x="21" y="323.7" width="6" height="8.5" rx="1" fill="#f4d450" stroke="#c8a020" stroke-width="0.7"/>
<text x="22.3" y="330.9" font-size="6" fill="#806010" stroke="#806010" stroke-width="0.16" font-style="italic">f</text>
<circle cx="26.3" cy="331.0" r="1.5" fill="#8890a0" stroke="#606878" stroke-width="0.5"/>
<text x="31" y="331.3" font-size="8.8" fill="#222" stroke="#222" stroke-width="0.16" textLength="15.6" lengthAdjust="spacingAndGlyphs" >Bands</text>
<line x1="14.5" y1="340.25" x2="20.5" y2="340.25" stroke="#a8a8a8" stroke-width="1" />
<rect x="21" y="335.65" width="6" height="8.5" rx="1" fill="#f4d450" stroke="#c8a020" stroke-width="0.7"/>
<text x="22.3" y="342.85" font-size="6" fill="#806010" stroke="#806010" stroke-width="0.16" font-style="italic">f</text>
<circle cx="26.3" cy="342.95" r="1.5" fill="#8890a0" stroke="#606878" stroke-width="0.5"/>
<text x="31" y="343.25" font-size="8.8" fill="#222" stroke="#222" stroke-width="0.16" textLength="13.8" lengthAdjust="spacingAndGlyphs" >Bears</text>
<line x1="14.5" y1="352.2" x2="20.5" y2="352.2" stroke="#a8a8a8" stroke-width="1" />
<rect x="21" y="347.6" width="6" height="8.5" rx="1" fill="#f4d450" stroke="#c8a020" stroke-width="0.7"/>
<text x="22.3" y="354.8" font-size="6" fill="#806010" stroke="#806010" stroke-width="0.16" font-style="italic">f</text>
<circle cx="26.3" cy="354.9" r="1.5" fill="#8890a0" stroke="#606878" stroke-width="0.5"/>
<text x="31" y="355.2" font-size="8.8" fill="#222" stroke="#222" stroke-width="0.16" textLength="12.2" lengthAdjust="spacingAndGlyphs" >Bulls</text>
<line x1="14.5" y1="364.15" x2="20.5" y2="364.15" stroke="#a8a8a8" stroke-width="1" />
<rect x="21" y="359.55" width="6" height="8.5" rx="1" fill="#f4d450" stroke="#c8a020" stroke-width="0.7"/>
<text x="22.3" y="366.75" font-size="6" fill="#806010" stroke="#806010" stroke-width="0.16" font-style="italic">f</text>
<circle cx="26.3" cy="366.85" r="1.5" fill="#8890a0" stroke="#606878" stroke-width="0.5"/>
<text x="31" y="367.15" font-size="8.8" fill="#222" stroke="#222" stroke-width="0.16" textLength="9" lengthAdjust="spacingAndGlyphs" >CCI</text>
<line x1="14.5" y1="376.1" x2="20.5" y2="376.1" stroke="#a8a8a8" stroke-width="1" />
<rect x="21" y="371.5" width="6" height="8.5" rx="1" fill="#f4d450" stroke="#c8a020" stroke-width="0.7"/>
<text x="22.3" y="378.7" font-size="6" fill="#806010" stroke="#806010" stroke-width="0.16" font-style="italic">f</text>
<circle cx="26.3" cy="378.8" r="1.5" fill="#8890a0" stroke="#606878" stroke-width="0.5"/>
<text x="31" y="379.1" font-size="8.8" fill="#222" stroke="#222" stroke-width="0.16" textLength="43.5" lengthAdjust="spacingAndGlyphs" >CurrencyIndex (1)</text>
<line x1="14.5" y1="388.05" x2="20.5" y2="388.05" stroke="#a8a8a8" stroke-width="1" />
<rect x="21" y="383.45" width="6" height="8.5" rx="1" fill="#f4d450" stroke="#c8a020" stroke-width="0.7"/>
<text x="22.3" y="390.65" font-size="6" fill="#806010" stroke="#806010" stroke-width="0.16" font-style="italic">f</text>
<circle cx="26.3" cy="390.75" r="1.5" fill="#8890a0" stroke="#606878" stroke-width="0.5"/>
<text x="31" y="391.05" font-size="8.8" fill="#222" stroke="#222" stroke-width="0.16" textLength="36.7" lengthAdjust="spacingAndGlyphs" >DataDownload</text>
<line x1="14.5" y1="400.0" x2="20.5" y2="400.0" stroke="#a8a8a8" stroke-width="1" />
<rect x="21" y="395.4" width="6" height="8.5" rx="1" fill="#f4d450" stroke="#c8a020" stroke-width="0.7"/>
<text x="22.3" y="402.6" font-size="6" fill="#806010" stroke="#806010" stroke-width="0.16" font-style="italic">f</text>
<circle cx="26.3" cy="402.7" r="1.5" fill="#8890a0" stroke="#606878" stroke-width="0.5"/>
<text x="31" y="403.0" font-size="8.8" fill="#222" stroke="#222" stroke-width="0.16" textLength="30" lengthAdjust="spacingAndGlyphs" >Heiken Ashi</text>
<line x1="14.5" y1="411.95" x2="20.5" y2="411.95" stroke="#a8a8a8" stroke-width="1" />
<rect x="21" y="407.35" width="6" height="8.5" rx="1" fill="#f4d450" stroke="#c8a020" stroke-width="0.7"/>
<text x="22.3" y="414.55" font-size="6" fill="#806010" stroke="#806010" stroke-width="0.16" font-style="italic">f</text>
<circle cx="26.3" cy="414.65" r="1.5" fill="#8890a0" stroke="#606878" stroke-width="0.5"/>
<text x="31" y="414.95" font-size="8.8" fill="#222" stroke="#222" stroke-width="0.16" textLength="23.7" lengthAdjust="spacingAndGlyphs" >Ichimoku</text>
<line x1="14.5" y1="423.9" x2="20.5" y2="423.9" stroke="#a8a8a8" stroke-width="1" />
<rect x="21" y="419.3" width="6" height="8.5" rx="1" fill="#f4d450" stroke="#c8a020" stroke-width="0.7"/>
<text x="22.3" y="426.5" font-size="6" fill="#806010" stroke="#806010" stroke-width="0.16" font-style="italic">f</text>
<circle cx="26.3" cy="426.6" r="1.5" fill="#8890a0" stroke="#606878" stroke-width="0.5"/>
<text x="31" y="426.9" font-size="8.8" fill="#222" stroke="#222" stroke-width="0.16" textLength="23.7" lengthAdjust="spacingAndGlyphs" >iExposure</text>
<line x1="14.5" y1="435.85" x2="20.5" y2="435.85" stroke="#a8a8a8" stroke-width="1" />
<rect x="21" y="431.25" width="6" height="8.5" rx="1" fill="#f4d450" stroke="#c8a020" stroke-width="0.7"/>
<text x="22.3" y="438.45" font-size="6" fill="#806010" stroke="#806010" stroke-width="0.16" font-style="italic">f</text>
<circle cx="26.3" cy="438.55" r="1.5" fill="#8890a0" stroke="#606878" stroke-width="0.5"/>
<text x="31" y="438.85" font-size="8.8" fill="#222" stroke="#222" stroke-width="0.16" textLength="16.2" lengthAdjust="spacingAndGlyphs" >MACD</text>
<line x1="14.5" y1="447.79999999999995" x2="20.5" y2="447.79999999999995" stroke="#a8a8a8" stroke-width="1" />
<rect x="21" y="443.2" width="6" height="8.5" rx="1" fill="#f4d450" stroke="#c8a020" stroke-width="0.7"/>
<text x="22.3" y="450.4" font-size="6" fill="#806010" stroke="#806010" stroke-width="0.16" font-style="italic">f</text>
<circle cx="26.3" cy="450.5" r="1.5" fill="#8890a0" stroke="#606878" stroke-width="0.5"/>
<text x="31" y="450.8" font-size="8.8" fill="#222" stroke="#222" stroke-width="0.16" textLength="29" lengthAdjust="spacingAndGlyphs" >Momentum</text>
<rect x="0" y="446" width="104" height="17" fill="#f0f0f0" />
<line x1="30" y1="446.5" x2="104" y2="446.5" stroke="#303030" stroke-width="1" />
<rect x="0" y="446" width="30" height="13.5" fill="#ffffff" />
<path d="M0 459.5 H30.5 V446" stroke="#303030" stroke-width="1" fill="none"/>
<text x="4" y="456" font-size="8.4" fill="#1a1a1a" stroke="#1a1a1a" stroke-width="0.05" textLength="22" lengthAdjust="spacingAndGlyphs" >Comune</text>
<text x="35" y="456" font-size="8" fill="#888" stroke="#888" stroke-width="0.16" textLength="20" lengthAdjust="spacingAndGlyphs" >Preferiti</text>
<line x1="59.5" y1="449" x2="59.5" y2="457" stroke="#888" stroke-width="0.8" />
<line x1="0" y1="462.5" x2="105" y2="462.5" stroke="#d8d8d8" stroke-width="1" />
<line x1="104.5" y1="446" x2="104.5" y2="463" stroke="#d8d8d8" stroke-width="1" />
<rect x="105" y="62.4" width="533.6" height="386.6" fill="#000000" />
<rect x="638.6" y="62" width="1.4" height="387.5" fill="#ffffff" />
<path d="M122.5 65.1 V311 M122.5 313 V435 M137.5 65.1 V311 M137.5 313 V435 M152.5 65.1 V311 M152.5 313 V435 M167.5 65.1 V311 M167.5 313 V435 M182.5 65.1 V311 M182.5 313 V435 M197.5 65.1 V311 M197.5 313 V435 M212.5 65.1 V311 M212.5 313 V435 M227.5 65.1 V311 M227.5 313 V435 M242.5 65.1 V311 M242.5 313 V435 M257.5 65.1 V311 M257.5 313 V435 M272.5 65.1 V311 M272.5 313 V435 M287.5 65.1 V311 M287.5 313 V435 M302.5 65.1 V311 M302.5 313 V435 M318.5 65.1 V311 M318.5 313 V435 M333.5 65.1 V311 M333.5 313 V435 M348.5 65.1 V311 M348.5 313 V435 M363.5 65.1 V311 M363.5 313 V435 M378.5 65.1 V311 M378.5 313 V435 M393.5 65.1 V311 M393.5 313 V435 M408.5 65.1 V311 M408.5 313 V435 M423.5 65.1 V311 M423.5 313 V435 M438.5 65.1 V311 M438.5 313 V435 M453.5 65.1 V311 M453.5 313 V435 M468.5 65.1 V311 M468.5 313 V435 M483.5 65.1 V311 M483.5 313 V435 M498.5 65.1 V311 M498.5 313 V435 M514.5 65.1 V311 M514.5 313 V435 M529.5 65.1 V311 M529.5 313 V435 M544.5 65.1 V311 M544.5 313 V435 M559.5 65.1 V311 M559.5 313 V435 M574.5 65.1 V311 M574.5 313 V435 M589.5 65.1 V311 M589.5 313 V435 M604.5 65.1 V311 M604.5 313 V435 " stroke="#5c6775" stroke-width="1" stroke-dasharray="1.5 2.42"/>
<path d="M107 84.5 H619 M107 108.5 H619 M107 133.5 H619 M107 158.5 H619 M107 182.5 H619 M107 207.5 H619 M107 231.5 H619 M107 255.5 H619 M107 280.5 H619 M107 304.5 H619 " stroke="#6a7480" stroke-width="1" stroke-dasharray="1 1.83"/>
<line x1="106" y1="155.5" x2="620" y2="155.5" stroke="#6c7c8e" stroke-width="1" shape-rendering="crispEdges"/>
<path d="M106.6 435.3 V65.05 H619.6 V435.3" stroke="#8c8c8c" stroke-width="1.5" fill="none"/>
<line x1="106" y1="435.4" x2="620.3" y2="435.4" stroke="#d0d0d0" stroke-width="1.2" />
<rect x="106" y="311" width="514" height="2" fill="#d0d0d0" />
<line x1="107.5" y1="435" x2="107.5" y2="438" stroke="#a4a4a4" stroke-width="1" shape-rendering="crispEdges"/>
<text x="107.1" y="444.3" font-size="7.8" fill="#f4f4f4" stroke="#f4f4f4" stroke-width="0.08" textLength="23.16" lengthAdjust="spacingAndGlyphs" >30 Jul 2020</text>
<line x1="137.5" y1="435" x2="137.5" y2="438" stroke="#a4a4a4" stroke-width="1" shape-rendering="crispEdges"/>
<text x="137.1" y="444.3" font-size="7.8" fill="#f4f4f4" stroke="#f4f4f4" stroke-width="0.08" textLength="24.41" lengthAdjust="spacingAndGlyphs" >31 Jul 02:00</text>
<line x1="167.5" y1="435" x2="167.5" y2="438" stroke="#a4a4a4" stroke-width="1" shape-rendering="crispEdges"/>
<text x="167.1" y="444.3" font-size="7.8" fill="#f4f4f4" stroke="#f4f4f4" stroke-width="0.08" textLength="24.41" lengthAdjust="spacingAndGlyphs" >31 Jul 18:00</text>
<line x1="197.5" y1="435" x2="197.5" y2="438" stroke="#a4a4a4" stroke-width="1" shape-rendering="crispEdges"/>
<text x="197.1" y="444.3" font-size="7.8" fill="#f4f4f4" stroke="#f4f4f4" stroke-width="0.08" textLength="23.91" lengthAdjust="spacingAndGlyphs" >3 Aug 10:00</text>
<line x1="227.5" y1="435" x2="227.5" y2="438" stroke="#a4a4a4" stroke-width="1" shape-rendering="crispEdges"/>
<text x="227.1" y="444.3" font-size="7.8" fill="#f4f4f4" stroke="#f4f4f4" stroke-width="0.08" textLength="23.91" lengthAdjust="spacingAndGlyphs" >4 Aug 02:00</text>
<line x1="257.5" y1="435" x2="257.5" y2="438" stroke="#a4a4a4" stroke-width="1" shape-rendering="crispEdges"/>
<text x="257.1" y="444.3" font-size="7.8" fill="#f4f4f4" stroke="#f4f4f4" stroke-width="0.08" textLength="23.91" lengthAdjust="spacingAndGlyphs" >4 Aug 18:00</text>
<line x1="287.5" y1="435" x2="287.5" y2="438" stroke="#a4a4a4" stroke-width="1" shape-rendering="crispEdges"/>
<text x="287.1" y="444.3" font-size="7.8" fill="#f4f4f4" stroke="#f4f4f4" stroke-width="0.08" textLength="23.91" lengthAdjust="spacingAndGlyphs" >5 Aug 10:00</text>
<line x1="317.5" y1="435" x2="317.5" y2="438" stroke="#a4a4a4" stroke-width="1" shape-rendering="crispEdges"/>
<text x="317.1" y="444.3" font-size="7.8" fill="#f4f4f4" stroke="#f4f4f4" stroke-width="0.08" textLength="23.91" lengthAdjust="spacingAndGlyphs" >6 Aug 02:00</text>
<line x1="348.5" y1="435" x2="348.5" y2="438" stroke="#a4a4a4" stroke-width="1" shape-rendering="crispEdges"/>
<text x="348.1" y="444.3" font-size="7.8" fill="#f4f4f4" stroke="#f4f4f4" stroke-width="0.08" textLength="23.91" lengthAdjust="spacingAndGlyphs" >6 Aug 18:00</text>
<line x1="378.5" y1="435" x2="378.5" y2="438" stroke="#a4a4a4" stroke-width="1" shape-rendering="crispEdges"/>
<text x="378.1" y="444.3" font-size="7.8" fill="#f4f4f4" stroke="#f4f4f4" stroke-width="0.08" textLength="23.91" lengthAdjust="spacingAndGlyphs" >7 Aug 10:00</text>
<line x1="408.5" y1="435" x2="408.5" y2="438" stroke="#a4a4a4" stroke-width="1" shape-rendering="crispEdges"/>
<text x="408.1" y="444.3" font-size="7.8" fill="#f4f4f4" stroke="#f4f4f4" stroke-width="0.08" textLength="26.41" lengthAdjust="spacingAndGlyphs" >10 Aug 03:00</text>
<line x1="438.5" y1="435" x2="438.5" y2="438" stroke="#a4a4a4" stroke-width="1" shape-rendering="crispEdges"/>
<text x="438.1" y="444.3" font-size="7.8" fill="#f4f4f4" stroke="#f4f4f4" stroke-width="0.08" textLength="26.41" lengthAdjust="spacingAndGlyphs" >10 Aug 19:00</text>
<line x1="468.5" y1="435" x2="468.5" y2="438" stroke="#a4a4a4" stroke-width="1" shape-rendering="crispEdges"/>
<text x="468.1" y="444.3" font-size="7.8" fill="#f4f4f4" stroke="#f4f4f4" stroke-width="0.08" textLength="25.74" lengthAdjust="spacingAndGlyphs" >11 Aug 11:00</text>
<line x1="498.5" y1="435" x2="498.5" y2="438" stroke="#a4a4a4" stroke-width="1" shape-rendering="crispEdges"/>
<text x="498.1" y="444.3" font-size="7.8" fill="#f4f4f4" stroke="#f4f4f4" stroke-width="0.08" textLength="26.41" lengthAdjust="spacingAndGlyphs" >12 Aug 03:00</text>
<line x1="528.5" y1="435" x2="528.5" y2="438" stroke="#a4a4a4" stroke-width="1" shape-rendering="crispEdges"/>
<text x="528.1" y="444.3" font-size="7.8" fill="#f4f4f4" stroke="#f4f4f4" stroke-width="0.08" textLength="26.41" lengthAdjust="spacingAndGlyphs" >12 Aug 19:00</text>
<line x1="558.5" y1="435" x2="558.5" y2="438" stroke="#a4a4a4" stroke-width="1" shape-rendering="crispEdges"/>
<text x="558.1" y="444.3" font-size="7.8" fill="#f4f4f4" stroke="#f4f4f4" stroke-width="0.08" textLength="26.07" lengthAdjust="spacingAndGlyphs" >13 Aug 11:00</text>
<line x1="589.5" y1="435" x2="589.5" y2="438" stroke="#a4a4a4" stroke-width="1" shape-rendering="crispEdges"/>
<text x="589.1" y="444.3" font-size="7.8" fill="#f4f4f4" stroke="#f4f4f4" stroke-width="0.08" textLength="26.41" lengthAdjust="spacingAndGlyphs" >14 Aug 03:00</text>
<text x="109.3" y="73.2" font-size="7.4" fill="#ffffff" stroke="#ffffff" stroke-width="0.04" textLength="82" lengthAdjust="spacingAndGlyphs" >EURLFX,H1  2.3314 2.3320 2.3306 2.3307</text>
<line x1="619.5" y1="84.5" x2="621" y2="84.5" stroke="#a4a4a4" stroke-width="1" />
<text x="622.5" y="86.9" font-size="7.0" fill="#f0f0f0" stroke="#f0f0f0" stroke-width="0.03" textLength="13.5" lengthAdjust="spacingAndGlyphs" >2.3365</text>
<line x1="619.5" y1="108.5" x2="621" y2="108.5" stroke="#a4a4a4" stroke-width="1" />
<text x="622.5" y="110.9" font-size="7.0" fill="#f0f0f0" stroke="#f0f0f0" stroke-width="0.03" textLength="13.5" lengthAdjust="spacingAndGlyphs" >2.3345</text>
<line x1="619.5" y1="133.5" x2="621" y2="133.5" stroke="#a4a4a4" stroke-width="1" />
<text x="622.5" y="135.9" font-size="7.0" fill="#f0f0f0" stroke="#f0f0f0" stroke-width="0.03" textLength="13.5" lengthAdjust="spacingAndGlyphs" >2.3325</text>
<line x1="619.5" y1="158.5" x2="621" y2="158.5" stroke="#a4a4a4" stroke-width="1" />
<text x="622.5" y="160.9" font-size="7.0" fill="#f0f0f0" stroke="#f0f0f0" stroke-width="0.03" textLength="13.5" lengthAdjust="spacingAndGlyphs" >2.3305</text>
<line x1="619.5" y1="182.5" x2="621" y2="182.5" stroke="#a4a4a4" stroke-width="1" />
<text x="622.5" y="184.9" font-size="7.0" fill="#f0f0f0" stroke="#f0f0f0" stroke-width="0.03" textLength="13.5" lengthAdjust="spacingAndGlyphs" >2.3285</text>
<line x1="619.5" y1="207.5" x2="621" y2="207.5" stroke="#a4a4a4" stroke-width="1" />
<text x="622.5" y="209.9" font-size="7.0" fill="#f0f0f0" stroke="#f0f0f0" stroke-width="0.03" textLength="13.5" lengthAdjust="spacingAndGlyphs" >2.3265</text>
<line x1="619.5" y1="231.5" x2="621" y2="231.5" stroke="#a4a4a4" stroke-width="1" />
<text x="622.5" y="233.9" font-size="7.0" fill="#f0f0f0" stroke="#f0f0f0" stroke-width="0.03" textLength="13.5" lengthAdjust="spacingAndGlyphs" >2.3245</text>
<line x1="619.5" y1="255.5" x2="621" y2="255.5" stroke="#a4a4a4" stroke-width="1" />
<text x="622.5" y="257.9" font-size="7.0" fill="#f0f0f0" stroke="#f0f0f0" stroke-width="0.03" textLength="13.5" lengthAdjust="spacingAndGlyphs" >2.3225</text>
<line x1="619.5" y1="280.5" x2="621" y2="280.5" stroke="#a4a4a4" stroke-width="1" />
<text x="622.5" y="282.9" font-size="7.0" fill="#f0f0f0" stroke="#f0f0f0" stroke-width="0.03" textLength="13.5" lengthAdjust="spacingAndGlyphs" >2.3205</text>
<line x1="619.5" y1="304.5" x2="621" y2="304.5" stroke="#a4a4a4" stroke-width="1" />
<text x="622.5" y="306.9" font-size="7.0" fill="#f0f0f0" stroke="#f0f0f0" stroke-width="0.03" textLength="13.5" lengthAdjust="spacingAndGlyphs" >2.3185</text>
<rect x="620" y="151.8" width="17.8" height="7.4" fill="#ffffff" />
<text x="621.5" y="158.3" font-size="7" fill="#000" stroke="#000" stroke-width="0.16" textLength="14.5" lengthAdjust="spacingAndGlyphs" >2.3307</text>
<text x="109" y="321.2" font-size="7.5" fill="#ffffff" stroke="#ffffff" stroke-width="0.04" textLength="195" lengthAdjust="spacingAndGlyphs" >CurrencyIndex (1) 50.09730 50.17273 50.21257 50.00692 50.17549 50.31633 50.00163 50.06503</text>
<text x="622" y="320.2" font-size="6.6" fill="#f0f0f0" stroke="#f0f0f0" stroke-width="0.16" textLength="15" lengthAdjust="spacingAndGlyphs" >50.3185</text>
<text x="622" y="432.8" font-size="6.6" fill="#f0f0f0" stroke="#f0f0f0" stroke-width="0.16" textLength="16.7" lengthAdjust="spacingAndGlyphs" >50.01851</text>
<text x="617.5" y="323.2" font-size="11.2" fill="#2b8cf0" stroke="#2b8cf0" stroke-width="0.16" textLength="14.75" lengthAdjust="spacingAndGlyphs" text-anchor="end" >EUR</text>
<text x="617.5" y="338.33" font-size="11.2" fill="#8a8a8a" stroke="#8a8a8a" stroke-width="0.16" textLength="14.75" lengthAdjust="spacingAndGlyphs" text-anchor="end" >USD</text>
<text x="617.5" y="353.46" font-size="11.2" fill="#8a8a8a" stroke="#8a8a8a" stroke-width="0.16" textLength="14.75" lengthAdjust="spacingAndGlyphs" text-anchor="end" >GBP</text>
<text x="617.5" y="368.59" font-size="11.2" fill="#8a8a8a" stroke="#8a8a8a" stroke-width="0.16" textLength="14.75" lengthAdjust="spacingAndGlyphs" text-anchor="end" >CAD</text>
<text x="617.5" y="383.72" font-size="11.2" fill="#8a8a8a" stroke="#8a8a8a" stroke-width="0.16" textLength="14.75" lengthAdjust="spacingAndGlyphs" text-anchor="end" >CHF</text>
<text x="617.5" y="398.85" font-size="11.2" fill="#8a8a8a" stroke="#8a8a8a" stroke-width="0.16" textLength="14.75" lengthAdjust="spacingAndGlyphs" text-anchor="end" >JPY</text>
<text x="617.5" y="413.98" font-size="11.2" fill="#8a8a8a" stroke="#8a8a8a" stroke-width="0.16" textLength="14.75" lengthAdjust="spacingAndGlyphs" text-anchor="end" >NZD</text>
<text x="617.5" y="429.11" font-size="11.2" fill="#8a8a8a" stroke="#8a8a8a" stroke-width="0.16" textLength="14.75" lengthAdjust="spacingAndGlyphs" text-anchor="end" >AUD</text>
<clipPath id="cm"><rect x="107" y="66" width="512" height="245"/></clipPath>
<clipPath id="ci"><rect x="107" y="313" width="512" height="122"/></clipPath>
<g clip-path="url(#cm)">
<polyline points="107,238.75 108.75,252.5 110,247.5 111.25,253.75 112.5,260 114.5,250 116.25,215 118.75,185 120,168.75 122,175 123.75,172.5 125.5,150 129.25,127.5 132.5,147.5 135,145 137.5,108.75 140,123.75 142,115 143.75,93.75 147.5,92.5 148.75,95 150.5,87 152.5,115 155,132.5 160,156.25 162,147.5 163.75,156.25 165.75,141.25 167.5,154.6 169.2,171.25 171.25,183.75 174.4,193.1 177.5,195.2 178.5,197.3 180,175.4 181.7,190 184.2,209.8 185.8,202.5 188,202.5 192.1,193.1 195.2,201.5 199.4,177.5 200.8,194.2 203.5,218.1 204.5,217 206.7,228.5 209.2,182.7 211.9,185.8 214,193.1 216.7,200.4 220.2,196.25 223.3,200.4 226.5,191 229.6,191 232.7,177.5 236.9,176.5 239,184.8 242.1,172.3 246.25,151.5 248.3,165 250.4,187.9 252.5,219.2 254.25,250 256.7,223.3 259.8,202.5 261.9,198.3 265,188 270,190 272.5,186.25 275,191.25 277.5,187.5 280,195 283.75,202.5 286.25,192.5 288,196 290,165 291.75,161.25 293.75,186.25 295.5,177.5 297.5,150 299.5,132.5 301,132.5 303,105 304.5,125 306,125 310,132 313.75,128.75 316.25,121.25 320,121.25 322.5,120 324.5,126.25 328.75,113.75 331.25,120 332.5,155 333.75,172.5 336.25,158.75 338.75,173.75 342.5,165 346.25,176.25 348.75,137.5 351.25,122.5 353.75,126.25 356,122.5 358.75,118.75 362,110 365,116.25 367,122.5 368.75,150 370.5,156.25 372.5,153.75 374.5,145 376.25,157.5 378,152.5 380,157.5 382,172.5 383.75,153.75 385.5,167.5 387.5,160 389.5,217.5 391.25,192.5 393,195 395,200 397.5,185 400.75,179.5 402.5,185 405,193.75 407.5,191.25 410,185 412.5,183.75 414.5,181.25 417.5,183.75 419.5,212.5 422,210 423.75,213.75 427.5,210 430,210 432.5,212.5 435,235 438.75,267.5 440.5,260 443.75,270 446.25,282.5 450,273.75 451.25,281.25 453.75,292.5 457.5,287.5 462,277.5 463.75,281.25 465.5,292.5 468,255 470,230 472.5,221.25 474.5,253.75 477.5,220 479.5,228.75 482,221.25 485,231.25 488.75,252.5 493,252.5 497,260 501.25,247.5 505,243.75 507.5,245 510.5,247.5 512,217.5 513.75,217.5 516.25,187.5 517.5,182.5 521.25,167.5 523,180 525,172.5 527.5,182.5 529.5,195 532.5,187.5 534.5,176.25 536,185 538.75,195 541.25,185 545,172.5 548.75,167.5 552.5,168.75 554.5,147.5 557.5,135 560,121.25 563.75,112.5 566.25,101.25 568.75,102 570,115 571.25,130 572.5,145 573,155 574.5,157.5 576.25,150 578,167.5 579.5,151.25 582.5,150 585,145 587.5,146.25 590,143.75 593.75,146.25 597.5,147.5 600,158.75 602,172.5 603.75,148.75 605,165 606.25,185 607.5,177.5 610,175 612.5,162.5 613.75,148.75 616.25,155 618,150" fill="none" stroke="#00d800" stroke-width="0.85" stroke-linejoin="round"/>
</g>
<g clip-path="url(#ci)">
<polyline points="107.5,387.5 108.75,390 110,382.5 112,390 113.75,382.5 117.5,373.75 118.75,375 120.5,385 123.75,378.75 128.75,352.5 133,360 135,355 137.5,341.25 140,346.25 142.5,341.25 145,337.5 147,328.75 148.75,330 150,326.25 152.5,335 153.75,340 155,336.25 158.75,347.5 161.25,352.5 163.75,357.5 166.25,353.75 168.75,375 171.25,400 173.75,408.75 176.25,413.75 178.75,387.5 181.25,375 184.5,388.75 187.5,387.5 191.25,385 193.75,382.5 196.25,391.25 199.5,392.5 201.25,402.5 205,401.25 207,412 209.5,400 215,396.25 218.75,398.75 222.5,395 224.5,396.25 226.25,403.75 228.75,393.75 232.5,382.5 236.25,385 238.75,388.75 242.5,372.5 246.25,351.25 250,360 252.5,368.75 254.5,386.25 257.5,377.5 261.25,372.5 265,367.5 267.5,367.5 270,367.5 272.5,361.25 275,366.25 278.75,368.75 283.75,373.75 288.75,366.25 291.25,365 293.75,367.5 296.25,347.5 298.75,320 301.25,332.5 302.5,328.75 305,345 307.5,350 310.5,357.5 313.75,355 316.25,351.25 318,358.75 320.5,352.5 323.75,370 327,358.75 329.5,351.25 331.25,365 334.5,396.25 337.5,397.5 340,402.5 344.5,406.25 347.5,400 349.5,378.75 352.5,371.25 357,359.5 360,363.75 363,361.25 365,365 367.5,366.25 371.25,383.75 374.5,386.25 376.25,373.75 378.75,357.5 382.5,373.75 384.5,360 387,365 390,396.25 391.25,393.75 393.75,405 395.5,428.75 397.5,425 401.25,428.75 402.5,387.5 405,391.25 408.75,385 413.75,383.75 417.5,386.25 420,396.25 423.75,395 425,400 432.5,395 435,412.5 437.5,417.5 438.75,415 442.5,422.5 446.25,427.5 450,415 453.75,428.75 456.25,420 461.25,408.75 463.75,410 467.5,402.5 470,381.25 472.5,376.25 474.5,391.25 477.5,382.5 480,370 483.75,365 486.25,368.75 490,376.25 492,372.5 496.25,375 498.75,372.5 502.5,385 506.25,393.75 510,381.25 512.5,375 514.5,390 517.5,377.5 520,368.75 522.5,372.5 525,357.5 528.75,365 531.25,358.75 534.5,346.25 538.75,353.75 543.75,345 547.5,343.75 551.25,343.75 555,334.5 557,347.5 559.5,337.5 562.5,351.25 568.75,353.75 572,382.5 575,378.75 578,388.75 582.5,377.5 586.25,377.5 589.5,388.75 592.5,385 597.5,382.5 601.25,398.75 603.75,401.25 605,412.5 607.5,413.75 608.75,417.5 612.5,413.75 615,402.5" fill="none" stroke="#2279e2" stroke-width="0.72" stroke-linejoin="round"/>
</g>
<rect x="105" y="450" width="535" height="12.5" fill="#f0f0f0" />
<line x1="105" y1="449.4" x2="640" y2="449.4" stroke="#ffffff" stroke-width="1.2" />
<line x1="105" y1="450.5" x2="640" y2="450.5" stroke="#3c3c3c" stroke-width="1" />
<line x1="105" y1="451.5" x2="640" y2="451.5" stroke="#ffffff" stroke-width="1" />
<text x="112.1" y="459.8" font-size="8.6" fill="#5e5e5e" stroke="#5e5e5e" stroke-width="0.1" textLength="29.5" lengthAdjust="spacingAndGlyphs" >USDCHF,H1</text>
<text x="152.1" y="459.8" font-size="8.6" fill="#5e5e5e" stroke="#5e5e5e" stroke-width="0.1" textLength="28.1" lengthAdjust="spacingAndGlyphs" >EURGBP,H1</text>
<text x="192" y="459.8" font-size="8.6" fill="#5e5e5e" stroke="#5e5e5e" stroke-width="0.1" textLength="26.75" lengthAdjust="spacingAndGlyphs" >USDJPY,H1</text>
<text x="229.3" y="459.8" font-size="8.6" fill="#5e5e5e" stroke="#5e5e5e" stroke-width="0.1" textLength="28.1" lengthAdjust="spacingAndGlyphs" >EURGBP,H1</text>
<text x="268.9" y="459.8" font-size="8.6" fill="#5e5e5e" stroke="#5e5e5e" stroke-width="0.1" textLength="29.3" lengthAdjust="spacingAndGlyphs" >USDCHF,H1</text>
<text x="308.8" y="459.8" font-size="8.6" fill="#5e5e5e" stroke="#5e5e5e" stroke-width="0.1" textLength="28.3" lengthAdjust="spacingAndGlyphs" >EURUSD,H1</text>
<text x="348.6" y="459.8" font-size="8.6" fill="#5e5e5e" stroke="#5e5e5e" stroke-width="0.1" textLength="28" lengthAdjust="spacingAndGlyphs" >NZDJPY,H1</text>
<line x1="147.7" y1="452.5" x2="147.7" y2="460.5" stroke="#a0a0a0" stroke-width="1" />
<line x1="186.25" y1="452.5" x2="186.25" y2="460.5" stroke="#a0a0a0" stroke-width="1" />
<line x1="224.8" y1="452.5" x2="224.8" y2="460.5" stroke="#a0a0a0" stroke-width="1" />
<line x1="263.75" y1="452.5" x2="263.75" y2="460.5" stroke="#a0a0a0" stroke-width="1" />
<line x1="303.75" y1="452.5" x2="303.75" y2="460.5" stroke="#a0a0a0" stroke-width="1" />
<line x1="343.5" y1="452.5" x2="343.5" y2="460.5" stroke="#a0a0a0" stroke-width="1" />
<rect x="382.5" y="450" width="38" height="11.5" fill="#ffffff" />
<path d="M382.5 450.5 V461.5 H420.5 V450.5" stroke="#222" stroke-width="1" fill="none"/>
<text x="387.8" y="459.8" font-size="8.6" fill="#111" stroke="#111" stroke-width="0.16" textLength="26.6" lengthAdjust="spacingAndGlyphs" >EURLFX,H1</text>
<path d="M627 454 l-1.8 2 l1.8 2" stroke="#777" stroke-width="0.8" fill="none"/>
<path d="M634 454 l1.8 2 l-1.8 2" stroke="#777" stroke-width="0.8" fill="none"/>
<line x1="105" y1="462.5" x2="640" y2="462.5" stroke="#fafafa" stroke-width="1" />
<rect x="0" y="463" width="640" height="15" fill="#f0f0f0" />
<text x="-0.8" y="475.3" font-size="8.2" fill="#111" stroke="#111" stroke-width="0.16" textLength="45" lengthAdjust="spacingAndGlyphs" >Per aiuto, premi F1</text>
<line x1="305.5" y1="465" x2="305.5" y2="478" stroke="#d0d0d0" stroke-width="1" />
<line x1="359.5" y1="465" x2="359.5" y2="478" stroke="#d0d0d0" stroke-width="1" />
<line x1="407.5" y1="465" x2="407.5" y2="478" stroke="#d0d0d0" stroke-width="1" />
<line x1="441" y1="465" x2="441" y2="478" stroke="#d0d0d0" stroke-width="1" />
<line x1="473.5" y1="465" x2="473.5" y2="478" stroke="#d0d0d0" stroke-width="1" />
<line x1="506" y1="465" x2="506" y2="478" stroke="#d0d0d0" stroke-width="1" />
<line x1="539" y1="465" x2="539" y2="478" stroke="#d0d0d0" stroke-width="1" />
<line x1="570.5" y1="465" x2="570.5" y2="478" stroke="#d0d0d0" stroke-width="1" />
<text x="307.2" y="475" font-size="8" fill="#111" stroke="#111" stroke-width="0.16" textLength="16.5" lengthAdjust="spacingAndGlyphs" >Default</text>
<path d="M573 476 L584 466 V476z" fill="#2a6aa0"/>
<path d="M573 476 V466 H584z" fill="#7aa040"/>
<path d="M575 476 v-3 M577.5 476 v-5 M580 476 v-7 M582.5 476 v-9" stroke="#f0f0f0" stroke-width="0.7"/>
<text x="585.5" y="475" font-size="8" fill="#111" stroke="#111" stroke-width="0.16" textLength="27" lengthAdjust="spacingAndGlyphs" >14859/2 kb</text>
<rect x="0" y="478.6" width="19" height="1.4" fill="#1a1a1a" />
<rect x="19" y="478.6" width="162" height="1.4" fill="#d4d4d4" />
<rect x="181" y="478.6" width="185" height="1.4" fill="#1c1c1c" />
<rect x="366" y="478.6" width="23" height="1.4" fill="#5a5a5a" />
<rect x="389" y="478.6" width="251" height="1.4" fill="#1c1c1c" />
</svg></body></html>
